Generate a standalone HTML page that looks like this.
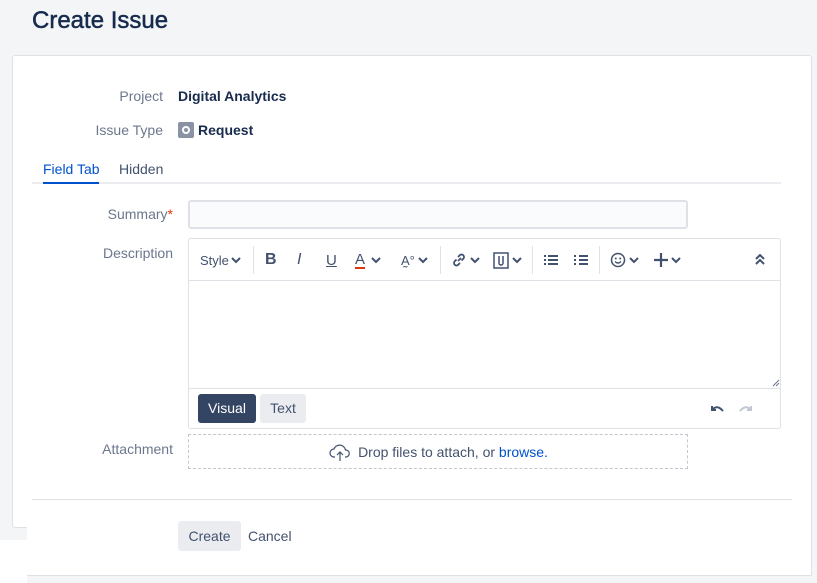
<!DOCTYPE html>
<html><head><style>
*{box-sizing:border-box;margin:0;padding:0}
body{width:817px;height:583px;background:#f4f5f7;font-family:"Liberation Sans",sans-serif;font-size:14px;color:#172b4d;position:relative;overflow:hidden}
.a{position:absolute}
.lbl{color:#6b778c;text-align:right;width:150px}
.ic{position:absolute;top:0;height:42px;display:flex;align-items:center;color:#42526e;font-size:14px}
.sep{position:absolute;top:7px;width:1px;height:28px;background:#dfe1e6}
svg{display:block}
</style></head><body>
<div class="a" style="left:32px;top:7px;font-size:24px;color:#172b4d;-webkit-text-stroke:0.5px #172b4d">Create Issue</div>
<div class="a" style="left:12px;top:55px;width:800px;height:473px;background:#fff;border:1px solid #dfe1e6;border-radius:3px"></div>
<div class="a" style="left:0;top:540px;width:27px;height:43px;background:#fff"></div>
<div class="a" style="left:27px;top:490px;width:785px;height:86px;background:#fff;border-bottom:1px solid #dfe1e6;border-right:1px solid #dfe1e6"></div>
<div class="a lbl" style="left:13px;top:88px">Project</div>
<div class="a" style="left:178px;top:88px;font-weight:bold">Digital Analytics</div>
<div class="a lbl" style="left:13px;top:122px">Issue Type</div>
<div class="a" style="left:178px;top:122px;width:16px;height:16px;background:#8993a4;border-radius:2px"><div class="a" style="left:4px;top:4px;width:8px;height:8px;border:2px solid #fff;border-radius:50%"></div></div>
<div class="a" style="left:198px;top:122px;font-weight:bold">Request</div>
<div class="a" style="left:43px;top:161px;color:#0052cc">Field Tab</div>
<div class="a" style="left:119px;top:161px;color:#42526e">Hidden</div>
<div class="a" style="left:32px;top:182px;width:749px;height:2px;background:#ebecf0"></div>
<div class="a" style="left:43px;top:182px;width:56px;height:2px;background:#0052cc"></div>
<div class="a lbl" style="left:23px;top:206px">Summary<span style="color:#de350b">*</span></div>
<div class="a" style="left:188px;top:200px;width:500px;height:29px;background:#fafbfc;border:2px solid #dfe1e6;border-radius:3px"></div>
<div class="a lbl" style="left:23px;top:245px">Description</div>
<div class="a" style="left:188px;top:238px;width:593px;height:191px;border:1px solid #dfe1e6;border-radius:3px">
 <div class="a" style="left:0;top:0;width:591px;height:42px;border-bottom:1px solid #dfe1e6">
  <div class="ic" style="left:11px;font-size:13px">Style<svg width="10" height="8" style="margin-left:2px"><path d="M1 2l4 4 4-4" stroke="#42526e" stroke-width="2" fill="none"/></svg></div>
  <div class="sep" style="left:64px"></div>
  <div class="ic" style="left:76px;font-weight:bold;font-size:16px">B</div>
  <div class="ic" style="left:108px;font-style:italic;font-size:16px">I</div>
  <div class="ic" style="left:137px;text-decoration:underline;font-size:15px">U</div>
  <div class="ic" style="left:166px;font-size:15px"><span style="border-bottom:2px solid #de350b;line-height:15px">A</span><svg width="10" height="8" style="margin-left:6px"><path d="M1 2l4 4 4-4" stroke="#42526e" stroke-width="2" fill="none"/></svg></div>
  <div class="ic" style="left:212px;font-size:13px">A̰°<svg width="10" height="8" style="margin-left:3px"><path d="M1 2l4 4 4-4" stroke="#42526e" stroke-width="2" fill="none"/></svg></div>
  <div class="sep" style="left:251px"></div>
  <div class="ic" style="left:262px"><svg width="16" height="16"><path d="M7 9l3-3M5.5 7.5l-2 2a2.5 2.5 0 003.5 3.5l2-2M10.5 8.5l2-2A2.5 2.5 0 009 3l-2 2" stroke="#42526e" stroke-width="1.8" fill="none"/></svg><svg width="10" height="8" style="margin-left:3px"><path d="M1 2l4 4 4-4" stroke="#42526e" stroke-width="2" fill="none"/></svg></div>
  <div class="ic" style="left:304px"><svg width="16" height="17"><rect x="1" y="1" width="14" height="15" stroke="#42526e" stroke-width="1.5" fill="none"/><path d="M6 4v7a2 2 0 004 0V4" stroke="#42526e" stroke-width="1.5" fill="none"/></svg><svg width="10" height="8" style="margin-left:3px"><path d="M1 2l4 4 4-4" stroke="#42526e" stroke-width="2" fill="none"/></svg></div>
  <div class="sep" style="left:343px"></div>
  <div class="ic" style="left:355px"><svg width="14" height="12"><path d="M0 2h2M4 2h10M0 6h2M4 6h10M0 10h2M4 10h10" stroke="#42526e" stroke-width="2"/></svg></div>
  <div class="ic" style="left:385px"><svg width="14" height="12"><path d="M0 2h2M5 2h9M0 6h2M5 6h9M0 10h2M5 10h9" stroke="#42526e" stroke-width="2"/></svg></div>
  <div class="sep" style="left:410px"></div>
  <div class="ic" style="left:421px"><svg width="16" height="16"><circle cx="8" cy="8" r="6.5" stroke="#42526e" stroke-width="1.5" fill="none"/><circle cx="5.8" cy="6.5" r="1" fill="#42526e"/><circle cx="10.2" cy="6.5" r="1" fill="#42526e"/><path d="M5 9.5q3 3 6 0" stroke="#42526e" stroke-width="1.3" fill="none"/></svg><svg width="10" height="8" style="margin-left:3px"><path d="M1 2l4 4 4-4" stroke="#42526e" stroke-width="2" fill="none"/></svg></div>
  <div class="ic" style="left:465px"><svg width="14" height="14"><path d="M7 0v14M0 7h14" stroke="#42526e" stroke-width="2.2"/></svg><svg width="10" height="8" style="margin-left:3px"><path d="M1 2l4 4 4-4" stroke="#42526e" stroke-width="2" fill="none"/></svg></div>
  <div class="ic" style="left:566px"><svg width="10" height="12"><path d="M1 5l4-4 4 4M1 10l4-4 4 4" stroke="#42526e" stroke-width="2" fill="none"/></svg></div>
 </div>
 <div class="a" style="left:583px;top:140px"><svg width="8" height="8"><path d="M7 1L1 7M7 4L4 7" stroke="#6b778c" stroke-width="1"/></svg></div>
 <div class="a" style="left:0;top:149px;width:591px;height:1px;background:#dfe1e6"></div>
 <div class="a" style="left:9px;top:155px;width:58px;height:29px;background:#344563;border-radius:3px;color:#fff;text-align:center;line-height:29px">Visual</div>
 <div class="a" style="left:71px;top:155px;width:46px;height:29px;background:#ebecf0;border-radius:3px;color:#42526e;text-align:center;line-height:29px">Text</div>
 <div class="a" style="left:521px;top:165px"><svg width="14" height="10"><path d="M2 2v4h4M2 6q5-6 11 1" stroke="#42526e" stroke-width="2" fill="none"/></svg></div>
 <div class="a" style="left:550px;top:165px"><svg width="14" height="10"><path d="M12 2v4H8M12 6Q7 0 1 7" stroke="#c1c7d0" stroke-width="2" fill="none"/></svg></div>
</div>
<div class="a lbl" style="left:23px;top:441px">Attachment</div>
<div class="a" style="left:188px;top:434px;width:500px;height:35px;border:1px dashed #c1c7d0;display:flex;align-items:center;justify-content:center;color:#42526e"><svg width="24" height="20" style="margin-right:6px"><path d="M7 15H6a4 4 0 010-8 6 6 0 0111.5 1A3.5 3.5 0 0118 15h-1M12 19v-9M9 13l3-3 3 3" stroke="#42526e" stroke-width="1.2" fill="none"/></svg>Drop files to attach, or&nbsp;<span style="color:#0052cc">browse.</span></div>
<div class="a" style="left:32px;top:499px;width:760px;height:1px;background:#dfe1e6"></div>
<div class="a" style="left:178px;top:521px;width:63px;height:30px;background:#ebecf0;border-radius:3px;color:#42526e;text-align:center;line-height:30px">Create</div>
<div class="a" style="left:248px;top:528px;color:#42526e">Cancel</div>
</body></html>
